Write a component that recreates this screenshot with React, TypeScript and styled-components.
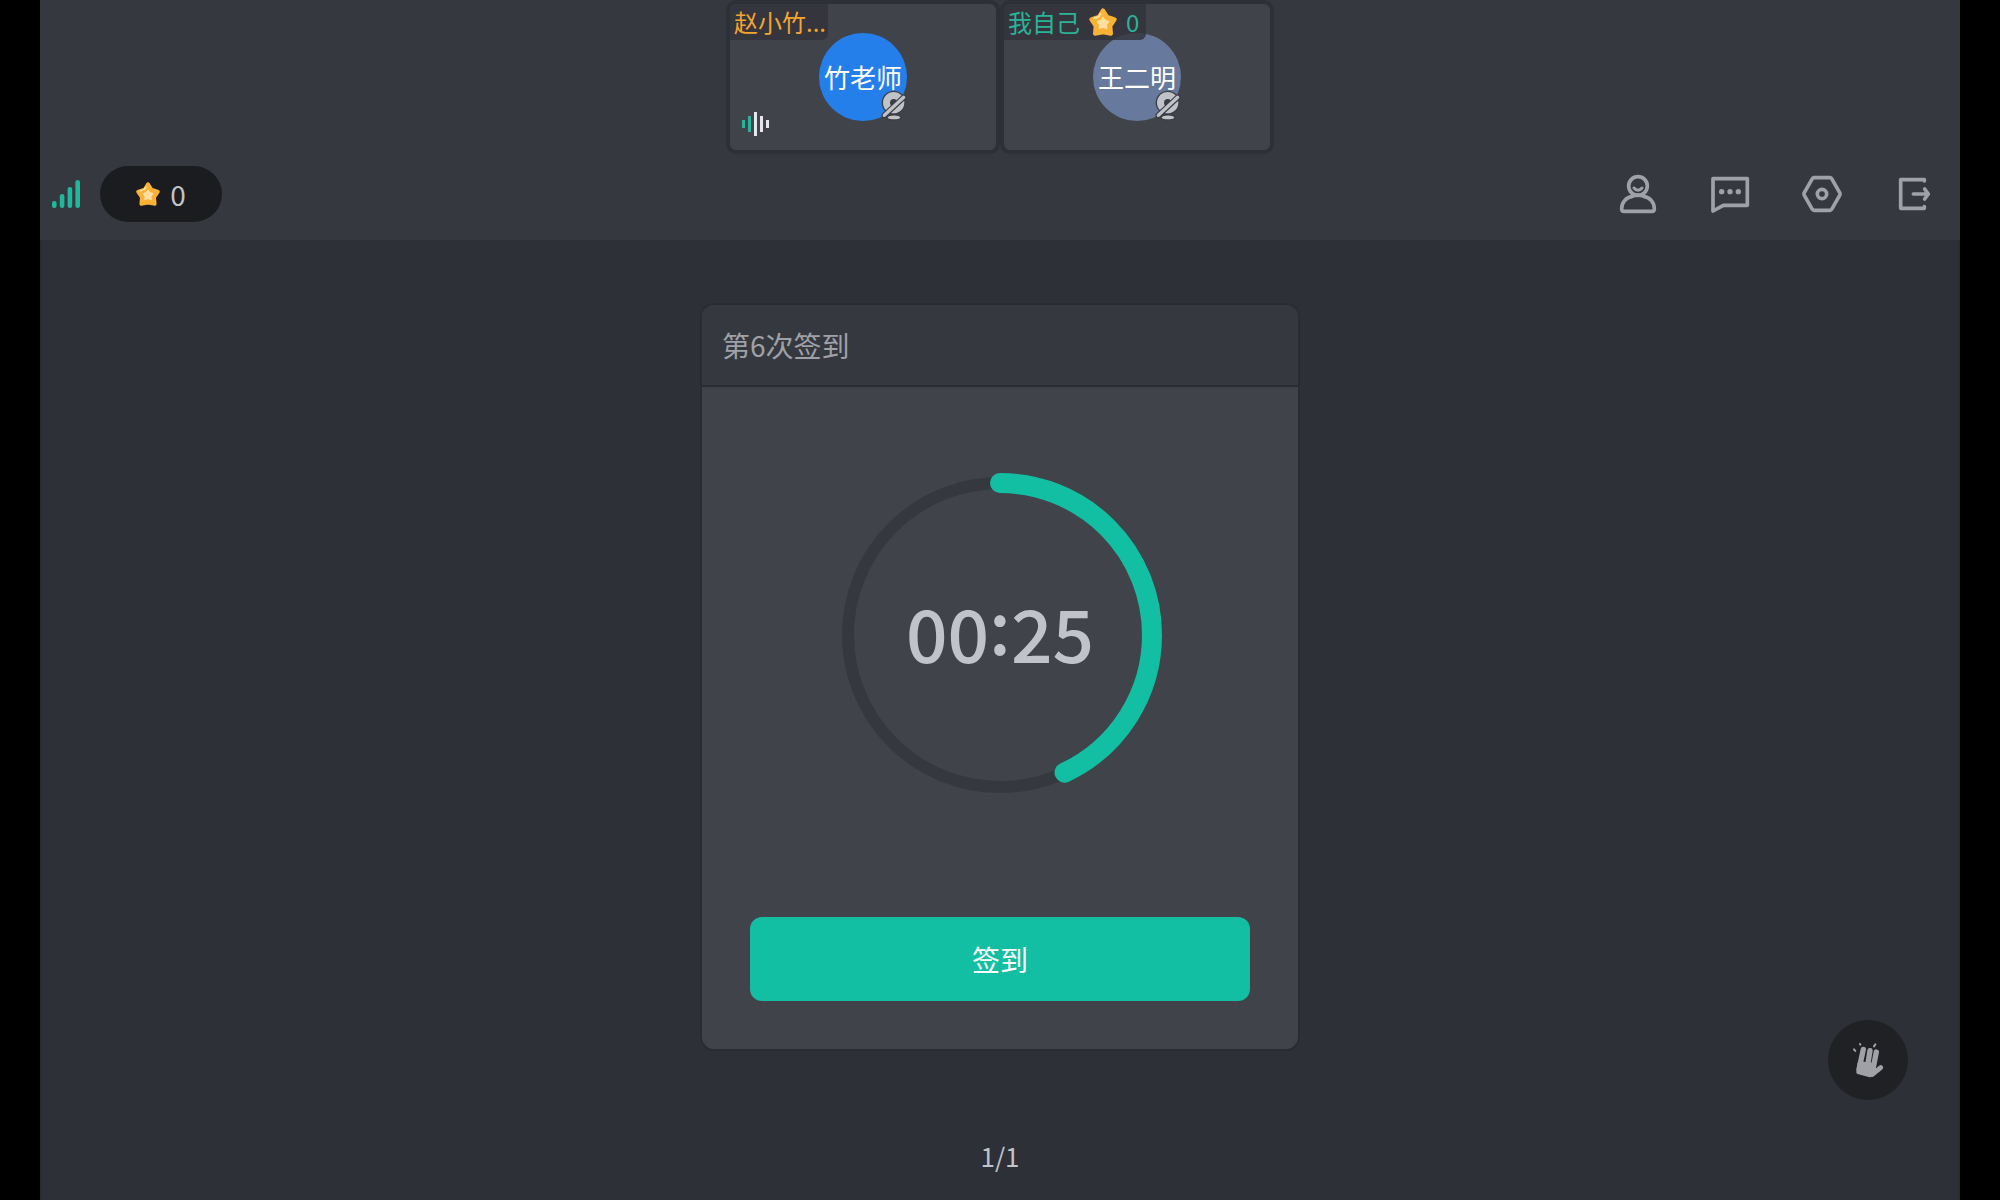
import React from "react";
import styled, { createGlobalStyle } from "styled-components";

const color = {
  bar: "#363840",
  stage: "#2e3038",
  line: "#2a2c34",
  surface: "#41434b",
  green: "#12bfa2",
  icon: "#9fa1a7",
  text: "#c0c3c8",
};

const GlobalStyle = createGlobalStyle`
  * { box-sizing: border-box; }
  body {
    margin: 0;
    background: #000;
    font-family: "Noto Sans CJK SC", "Noto Sans", sans-serif;
  }
  button { font-family: inherit; border: 0; padding: 0; cursor: pointer; }
  svg { display: block; flex: none; }
`;

const Classroom = styled.div`
  display: flex;
  flex-direction: column;
  min-height: 100vh;
  margin: 0 40px;
  background: ${color.bar};
`;

const Seats = styled.section`
  display: flex;
  justify-content: center;
`;

const Seat = styled.article`
  position: relative;
  display: flex;
  align-items: center;
  justify-content: center;
  width: 274px;
  height: 154px;
  border: 4px solid ${color.stage};
  border-radius: 10px;
  background: ${color.surface};
`;

const SeatTag = styled.header<{ $tone: string; $end: number }>`
  position: absolute;
  top: 0;
  left: 0;
  display: flex;
  align-items: center;
  gap: 9px;
  height: 36px;
  padding: 0 ${(p) => p.$end}px 0 4px;
  border-radius: 6px 0 6px 0;
  background: rgba(50, 50, 58, 0.8);
  color: ${(p) => p.$tone};
  font-size: 24px;
  line-height: 36px;
  white-space: nowrap;
`;

const Avatar = styled.div<{ $fill: string }>`
  position: relative;
  display: flex;
  align-items: center;
  justify-content: center;
  width: 88px;
  height: 88px;
  border-radius: 50%;
  background: ${(p) => p.$fill};
  color: #fff;
  font-size: 26px;
  line-height: 36px;
  white-space: nowrap;
`;

const CameraBadge = styled.span`
  position: absolute;
  right: 0;
  bottom: 0;
`;

const VoiceBadge = styled.span`
  position: absolute;
  left: 12px;
  bottom: 14px;
`;

const Toolbar = styled.header`
  display: flex;
  align-items: center;
  gap: 20px;
  height: 86px;
  padding: 0 26px 6px 12px;
`;

const Score = styled.div`
  display: flex;
  align-items: center;
  justify-content: center;
  gap: 10px;
  width: 122px;
  height: 56px;
  border-radius: 28px;
  background: #1b1c20;
  color: ${color.text};
  font-size: 28px;
  line-height: 40px;
`;

const Tools = styled.nav`
  display: flex;
  gap: 52px;
  margin-left: auto;
`;

const ToolButton = styled.button`
  background: none;
  color: ${color.icon};
`;

const Stage = styled.main`
  position: relative;
  display: flex;
  flex: 1;
  flex-direction: column;
  align-items: center;
  padding: 63px 24px 24px;
  border: solid ${color.line};
  border-width: 0 2px;
  background: ${color.stage};
`;

const Panel = styled.section`
  width: 600px;
  max-width: 100%;
  overflow: hidden;
  border: 2px solid ${color.line};
  border-radius: 14px;
  background: ${color.surface};
`;

const PanelTitle = styled.h1`
  margin: 0;
  padding: 20px;
  border-bottom: 2px solid ${color.line};
  background: ${color.bar};
  color: ${color.icon};
  font-size: 28px;
  font-weight: 400;
  line-height: 40px;
`;

const PanelBody = styled.div`
  display: flex;
  flex-direction: column;
  align-items: center;
  gap: 120px;
  padding: 86px 48px 48px;
`;

const Countdown = styled.div`
  display: grid;
  place-items: center;
  > * { grid-area: 1 / 1; }
`;

const Time = styled.time`
  display: flex;
  color: ${color.text};
  font-size: 73px;
  font-weight: 500;
  line-height: 96px;
`;

const Colon = styled.span`
  padding-bottom: 16px;
  margin-top: -8px;
`;

const SignInButton = styled.button`
  width: 100%;
  height: 84px;
  border-radius: 12px;
  background: ${color.green};
  color: #fff;
  font-size: 28px;
  line-height: 40px;
`;

const PageCount = styled.footer`
  margin-top: auto;
  color: ${color.text};
  font-size: 26px;
  line-height: 40px;
`;

const HandButton = styled.button`
  position: absolute;
  right: 50px;
  bottom: 100px;
  display: grid;
  place-items: center;
  width: 80px;
  height: 80px;
  border-radius: 50%;
  background: #202125;
  color: ${color.icon};
`;

function Star({ size }: { size: number }) {
  return (
    <svg width={size} height={size} viewBox="0 0 84 84" aria-hidden="true">
      <path
        d="M42 7 L54 26 L77 34 L64 54 L66 77 L42 73 L18 77 L20 54 L7 34 L30 26Z"
        fill="#fdb235"
        stroke="#fdb235"
        strokeWidth="12"
        strokeLinejoin="round"
      />
      <path
        d="M42 28 L48 37 L59 41 L52 50 L53 61 L42 58 L31 61 L32 50 L25 41 L36 37Z"
        fill="#ffe0a3"
        stroke="#ffe0a3"
        strokeWidth="4"
        strokeLinejoin="round"
      />
      <path d="M15 31 L29 26 L35 18" fill="none" stroke="#ffe9b0" strokeWidth="5" strokeLinecap="round" strokeLinejoin="round" />
    </svg>
  );
}

function CameraOff() {
  return (
    <svg width="26" height="31" viewBox="0 0 78 93" aria-hidden="true">
      <g stroke="#3b3d46" strokeWidth="4">
        <path d="M18 82 C22 72 56 72 60 82 C60 88 50 90 39 90 C28 90 18 88 18 82Z" fill="#bfc2c6" />
        <circle cx="38" cy="38" r="34" fill="#bfc2c6" />
      </g>
      <circle cx="38" cy="38" r="11" fill="#3b3d46" />
      <path d="M10 76 L68 22" stroke="#3b3d46" strokeWidth="17" strokeLinecap="round" />
      <path d="M10 76 L68 22" stroke="#bfc2c6" strokeWidth="10" strokeLinecap="round" />
    </svg>
  );
}

const voiceBars = [8, 16, 24, 16, 8];

function Voice() {
  return (
    <svg width="27" height="24" viewBox="0 0 27 24" aria-hidden="true">
      {voiceBars.map((h, i) => (
        <rect key={i} x={i * 6} y={12 - h / 2} width="3" height={h} fill={i < 2 ? "#2bb39a" : "#e6e7ec"} />
      ))}
    </svg>
  );
}

const signalBars = [7, 14, 21, 28];

function Signal() {
  return (
    <svg width="28" height="28" viewBox="0 0 28 28" role="img" aria-label="网络信号">
      {signalBars.map((h, i) => (
        <rect key={h} x={i * 7.8} y={28 - h} width="4.6" height={h} rx="2.3" fill="#1fb89d" />
      ))}
    </svg>
  );
}

const toolShapes: { label: string; shape: React.ReactNode }[] = [
  {
    label: "成员",
    shape: (
      <>
        <circle cx="60" cy="36" r="28" />
        <path d="M48 42 Q60 56 72 42" strokeWidth="9" />
        <path d="M42 67 C24 70 11 86 11 104 Q11 112 19 112 H101 Q109 112 109 104 C109 86 96 70 78 67" />
        <path d="M42 67 Q60 60 78 67" />
      </>
    ),
  },
  {
    label: "聊天",
    shape: (
      <>
        <path d="M9 14 H112 V94 H40 L9 111Z" />
        <g fill="currentColor" stroke="none">
          <circle cx="35" cy="53" r="8" />
          <circle cx="60" cy="53" r="8" />
          <circle cx="85" cy="53" r="8" />
        </g>
      </>
    ),
  },
  {
    label: "设置",
    shape: (
      <>
        <path d="M36 11 H84 Q87 11 89 14 L113 56 Q115 60 113 64 L89 106 Q87 109 84 109 H36 Q33 109 31 106 L7 64 Q5 60 7 56 L31 14 Q33 11 36 11Z" />
        <circle cx="60" cy="60" r="14" />
      </>
    ),
  },
  {
    label: "退出",
    shape: (
      <>
        <path d="M91 21 V17 H20 V103 H91 V98" />
        <path d="M58 60 H102 M92 45 L103 60 L92 75" />
      </>
    ),
  },
];

function Hand() {
  return (
    <svg width="34" height="38" viewBox="0 0 102 114" fill="none" stroke="currentColor" strokeLinecap="round" strokeLinejoin="round" aria-hidden="true">
      <path d="M37 25 L24 85 M57 29 L48 85 M76 33 L66 85" strokeWidth="16" />
      <path d="M25 66 L64 70 L72 88 L57 104 L21 94Z" fill="currentColor" strokeWidth="10" />
      <path d="M89 80 L64 100" strokeWidth="15" />
      <path d="M9 25 L13 30 M27 9 L28 11 M73 10 L69 16" strokeWidth="6" />
    </svg>
  );
}

const RADIUS = 152;
const LENGTH = 2 * Math.PI * RADIUS;

function Ring({ progress }: { progress: number }) {
  return (
    <svg width="324" height="324" viewBox="-162 -162 324 324" fill="none" aria-hidden="true">
      <circle r={RADIUS} stroke={color.bar} strokeWidth="12" />
      <circle
        r={RADIUS}
        stroke={color.green}
        strokeWidth="20"
        strokeLinecap="round"
        strokeDasharray={`${LENGTH * progress} ${LENGTH}`}
        transform="rotate(-90)"
      />
    </svg>
  );
}

export default function App() {
  return (
    <>
      <GlobalStyle />
      <Classroom>
        <Seats>
          <Seat>
            <Avatar $fill="#257feb">
              竹老师
              <CameraBadge><CameraOff /></CameraBadge>
            </Avatar>
            <SeatTag $tone="#f5a52f" $end={2}>赵小竹...</SeatTag>
            <VoiceBadge><Voice /></VoiceBadge>
          </Seat>
          <Seat>
            <Avatar $fill="#67799c">
              王二明
              <CameraBadge><CameraOff /></CameraBadge>
            </Avatar>
            <SeatTag $tone="#2bb39a" $end={7}>
              我自己
              <Star size={28} />
              <span>0</span>
            </SeatTag>
          </Seat>
        </Seats>

        <Toolbar>
          <Signal />
          <Score>
            <Star size={24} />
            <span>0</span>
          </Score>
          <Tools>
            {toolShapes.map(({ label, shape }) => (
              <ToolButton key={label} type="button" aria-label={label}>
                <svg width="40" height="40" viewBox="0 0 120 120" fill="none" stroke="currentColor" strokeWidth="11" strokeLinecap="round" strokeLinejoin="round">
                  {shape}
                </svg>
              </ToolButton>
            ))}
          </Tools>
        </Toolbar>

        <Stage>
          <Panel>
            <PanelTitle>第6次签到</PanelTitle>
            <PanelBody>
              <Countdown>
                <Ring progress={0.43} />
                <Time>
                  00<Colon>:</Colon>25
                </Time>
              </Countdown>
              <SignInButton type="button">签到</SignInButton>
            </PanelBody>
          </Panel>
          <PageCount>1/1</PageCount>
          <HandButton type="button" aria-label="举手">
            <Hand />
          </HandButton>
        </Stage>
      </Classroom>
    </>
  );
}
